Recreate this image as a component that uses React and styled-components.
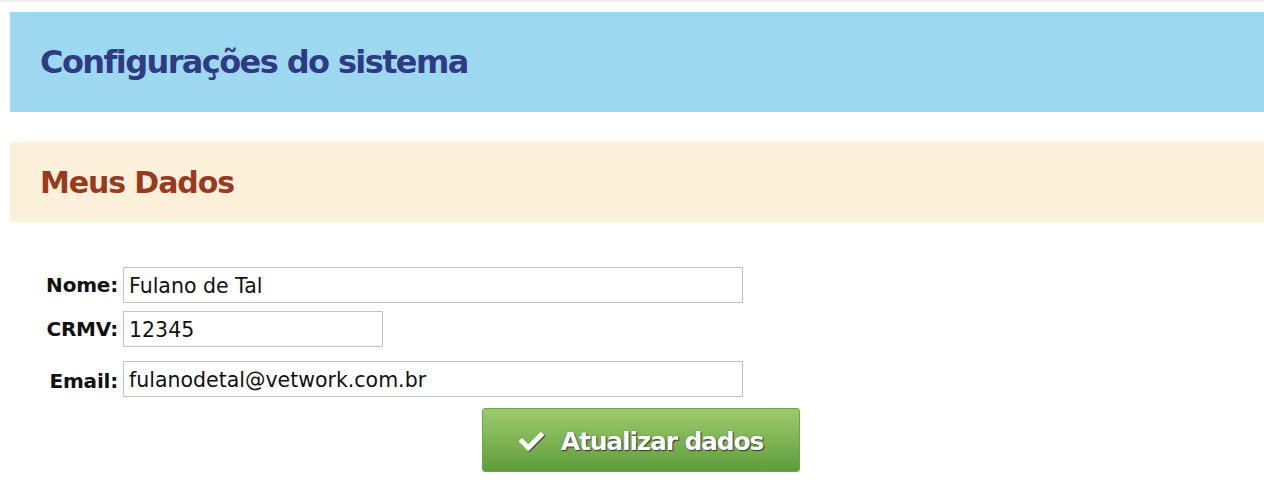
import React from 'react';
import styled, { createGlobalStyle } from 'styled-components';
import { FaCheck } from 'react-icons/fa';

const GlobalStyle = createGlobalStyle`
    body {
        margin: 0;
        background: #ffffff;
        font-family: "DejaVu Sans", Verdana, sans-serif;
    }
`;

const TopShade = styled.div`
    height: 3px;
    background: linear-gradient(#ececec, #fafafa);
`;

const Page = styled.div`
    padding: 9px 0 0 10px;
`;

const Banner = styled.div`
    background-color: ${(p) => p.$bg};
    height: ${(p) => p.$height}px;
    margin-bottom: ${(p) => p.$gap || 0}px;
    display: flex;
    align-items: center;
    padding-left: 30px;
    h1, h2 {
        margin: 0;
        color: ${(p) => p.$color};
        font-family: "DejaVu Sans", Tahoma, sans-serif;
        font-weight: bold;
    }
    h1 { font-size: 32px; letter-spacing: -1.6px; }
    h2 { font-size: 30px; letter-spacing: -1.1px; }
`;

const Form = styled.form`
    display: grid;
    grid-template-columns: 72px auto;
    column-gap: 5px;
    padding: 45px 0 0 36px;
    align-items: center;
    justify-items: start;
`;

const Label = styled.label`
    justify-self: end;
    font-family: "DejaVu Sans", Tahoma, sans-serif;
    font-weight: bold;
    font-size: 20px;
    letter-spacing: -0.2px;
    color: #111;
    margin-top: ${(p) => p.$top || 0}px;
`;

const Input = styled.input`
    box-sizing: border-box;
    width: ${(p) => p.$width}px;
    height: 36px;
    margin-top: ${(p) => p.$top || 0}px;
    border: 1px solid #c3c3c3;
    padding: 2px 5px 0;
    font-family: "DejaVu Sans", "Lucida Grande", sans-serif;
    font-size: 20.5px;
    color: #111;
    outline: none;
`;

const ButtonRow = styled.div`
    display: flex;
    justify-content: center;
    padding: 11px 0 0 8px;
`;

const Button = styled.button`
    display: flex;
    align-items: center;
    gap: 17px;
    width: 318px;
    height: 64px;
    justify-content: center;
    border: 1px solid #6aa548;
    border-radius: 3px;
    background: linear-gradient(#9dcb6c, #5f9d3c);
    color: #fff;
    font-family: "DejaVu Sans", Tahoma, sans-serif;
    font-weight: bold;
    font-size: 25px;
    letter-spacing: -1.2px;
    text-shadow: 1px 1px 1px #333, 0 0 1px #444;
    padding: 2px 0 0;
    cursor: pointer;
    svg {
        font-size: 25px;
        filter: drop-shadow(1px 1px 0 #444);
    }
`;

export default function App() {
    return (
        <>
            <GlobalStyle />
            <TopShade />
            <Page>
                <Banner $bg="#9ed8f0" $color="#2e3b84" $height={100} $gap={30}>
                    <h1>Configurações do sistema</h1>
                </Banner>
                <Banner $bg="#fcf0da" $color="#973b1f" $height={80}>
                    <h2>Meus Dados</h2>
                </Banner>
                <Form onSubmit={(e) => e.preventDefault()}>
                    <Label htmlFor="nome">Nome:</Label>
                    <Input id="nome" $width={620} defaultValue="Fulano de Tal" />
                    <Label htmlFor="crmv" $top={8}>CRMV:</Label>
                    <Input id="crmv" $width={260} $top={8} defaultValue="12345" />
                    <Label htmlFor="email" $top={17}>Email:</Label>
                    <Input id="email" $width={620} $top={14} defaultValue="fulanodetal@vetwork.com.br" />
                </Form>
                <ButtonRow>
                    <Button type="button">
                        <FaCheck />
                        Atualizar dados
                    </Button>
                </ButtonRow>
            </Page>
        </>
    );
}
